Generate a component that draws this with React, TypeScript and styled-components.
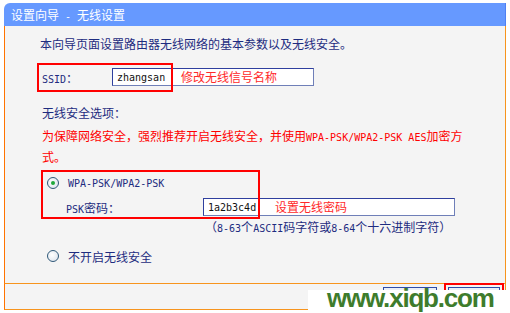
import React from 'react';
import styled, { createGlobalStyle } from 'styled-components';

const NAVY = '#1e2c80';
const ORANGE = '#f7941d';
const RED = '#ff0000';

const GlobalStyle = createGlobalStyle`
  * { box-sizing: border-box; }
  html, body { margin: 0; padding: 0; background: #fff; }
  body {
    font-family: "Noto Sans CJK SC", "Liberation Sans", sans-serif;
    font-size: 12px;
  }
`;

const Page = styled.div`
  position: relative;
  width: 510px;
  height: 313px;
  padding: 3px 0 0 4px;
  overflow: hidden;
`;

const Panel = styled.div`
  width: 502px;
`;

const TitleBar = styled.div`
  height: 23px;
  line-height: 23px;
  padding-left: 7px;
  background: #6699ff;
  border-radius: 6px 0 0 0;
  border-right: 1px solid #4f80f2;
  color: #fff;
`;

const Body = styled.div`
  height: 257px;
  padding: 9px 0 0 36px;
  background: #f4f4f4;
  border-left: 1px solid #ff7300;
  border-right: 1px solid ${ORANGE};
  color: ${NAVY};
`;

// ascii runs are half-width, like the old bitmap font
const Latin = styled.span`
  font-family: "DejaVu Sans Mono", "Liberation Mono", monospace;
  font-size: 10px;
`;

const Intro = styled.div`
  line-height: 18px;
  margin-left: -1px;
`;

const FieldRow = styled.div`
  position: relative;
  display: flex;
  align-items: center;
  height: 20px;
  margin-top: 14px;
  padding-left: 1px;
`;

const FieldLabel = styled.div<{ $width: number }>`
  width: ${p => p.$width}px;
  flex-shrink: 0;
`;

const InputWrap = styled.div`
  position: relative;
`;

const TextInput = styled.input<{ $width: number }>`
  display: block;
  width: ${p => p.$width}px;
  height: 18px;
  margin: 0;
  padding: 0 0 0 4px;
  border: 1px solid #2f3f9e;
  border-right-color: #6f7fb8;
  border-bottom-color: #6f7fb8;
  background: #fff;
  color: #111;
  font-family: "DejaVu Sans Mono", "Liberation Mono", monospace;
  font-size: 10px;
  outline: none;
`;

const Note = styled.span<{ $left: number }>`
  position: absolute;
  left: ${p => p.$left}px;
  top: 0;
  line-height: 18px;
  color: #ff2a2a;
  white-space: nowrap;
`;

const RedFrame = styled.div<{ $left: number; $top: number; $width: number; $height: number }>`
  position: absolute;
  left: ${p => p.$left}px;
  top: ${p => p.$top}px;
  width: ${p => p.$width}px;
  height: ${p => p.$height}px;
  border: 2px solid ${RED};
  pointer-events: none;
`;

const SectionLabel = styled.div`
  margin-top: 17px;
  padding-left: 1px;
  line-height: 18px;
`;

const Warning = styled.div`
  width: 430px;
  margin-top: 4px;
  padding-left: 1px;
  line-height: 19px;
  color: ${RED};
`;

const SecurityGroup = styled.div`
  position: relative;
  margin-top: 4px;
  padding-top: 3px;
`;

const RadioRow = styled.div<{ $gapTop?: number }>`
  display: flex;
  align-items: center;
  gap: 9px;
  height: 20px;
  margin-top: ${p => p.$gapTop || 0}px;
  padding-left: 6px;
`;

const Radio = styled.span<{ $checked?: boolean }>`
  display: inline-flex;
  align-items: center;
  justify-content: center;
  width: 12px;
  height: 12px;
  flex-shrink: 0;
  border-radius: 50%;
  border: 1px solid #2f5878;
  background: radial-gradient(circle at 40% 40%, #ffffff 0%, #d8e0ea 100%);

  &::after {
    content: '';
    width: 4px;
    height: 4px;
    border-radius: 50%;
    background: #1fa83a;
    display: ${p => (p.$checked ? 'block' : 'none')};
  }
`;

const PskRow = styled(FieldRow)`
  margin-top: 4px;
  padding-left: 25px;
`;

const Hint = styled.div`
  margin: 2px 0 0 164px;
  line-height: 16px;
`;

const Footer = styled.div`
  position: relative;
  display: flex;
  justify-content: flex-end;
  gap: 11px;
  height: 27px;
  padding: 3px 5px 0 0;
  background: #f4f4f4;
  border: 1px solid ${ORANGE};
  border-left-color: #ff7300;
`;

const Button = styled.button<{ $width: number }>`
  width: ${p => p.$width}px;
  height: 20px;
  margin: 0;
  padding: 0;
  border: 1px solid #2e4aa8;
  background: #e9eef8;
  color: ${NAVY};
  font-family: "Noto Sans CJK SC", sans-serif;
  font-size: 12px;
  line-height: 18px;
`;

const Watermark = styled.div`
  position: absolute;
  left: 308px;
  top: 290px;
  width: 202px;
  height: 23px;
  padding-left: 19px;
  background: #fff;
  color: #3e7c2c;
  font-family: "Liberation Sans", Arial, sans-serif;
  font-weight: bold;
  font-size: 26px;
  letter-spacing: -1.2px;
  line-height: 16px;
  white-space: nowrap;
`;

const App: React.FC = () => {
  return (
    <Page>
      <GlobalStyle />
      <Panel>
        <TitleBar>
          设置向导<Latin> - </Latin>无线设置
        </TitleBar>
        <Body>
          <Intro>本向导页面设置路由器无线网络的基本参数以及无线安全。</Intro>

          <FieldRow>
            <FieldLabel $width={70}>
              <Latin>SSID</Latin>：
            </FieldLabel>
            <InputWrap>
              <TextInput $width={202} value="zhangsan" readOnly />
              <Note $left={69}>修改无线信号名称</Note>
            </InputWrap>
            <RedFrame $left={-4} $top={-4} $width={136} $height={29} />
          </FieldRow>

          <SectionLabel>无线安全选项：</SectionLabel>
          <Warning>
            为保障网络安全，强烈推荐开启无线安全，并使用<Latin>WPA-PSK/WPA2-PSK AES</Latin>加密方式。
          </Warning>

          <SecurityGroup>
            <RadioRow>
              <Radio $checked />
              <Latin>WPA-PSK/WPA2-PSK</Latin>
            </RadioRow>
            <PskRow>
              <FieldLabel $width={137}>
                <Latin>PSK</Latin>密码：
              </FieldLabel>
              <InputWrap>
                <TextInput $width={252} value="1a2b3c4d" readOnly />
                <Note $left={72}>设置无线密码</Note>
              </InputWrap>
            </PskRow>
            <RedFrame $left={0} $top={0} $width={219} $height={49} />
          </SecurityGroup>
          <Hint>
            （<Latin>8-63</Latin>个<Latin>ASCII</Latin>码字符或<Latin>8-64</Latin>个十六进制字符）
          </Hint>

          <RadioRow $gapTop={9}>
            <Radio />
            <span>不开启无线安全</span>
          </RadioRow>
        </Body>
        <Footer>
          <Button $width={54}>上一步</Button>
          <Button $width={52}>下一步</Button>
          <RedFrame $left={439} $top={-1} $width={60} $height={24} />
        </Footer>
      </Panel>
      <Watermark>www.xiqb.com</Watermark>
    </Page>
  );
};

export default App;
